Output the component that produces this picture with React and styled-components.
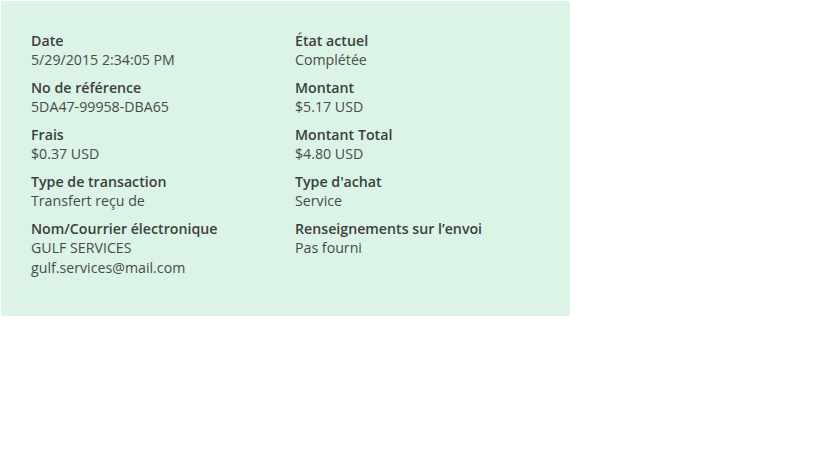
import React from 'react'
import styled, { createGlobalStyle } from 'styled-components'

const GlobalStyle = createGlobalStyle`
  body {
    margin: 0;
    background: #ffffff;
    font-family: "Open Sans", "Noto Sans", sans-serif;
  }
`

const Panel = styled.div`
  margin: 1px 0 0 1px;
  width: 569px;
  box-sizing: border-box;
  padding: 30px 0 38px 30px;
  background: #dbf4e6;
  border-radius: 2px;
  display: grid;
  grid-template-columns: 264px 1fr;
  row-gap: 8px;
`

const Field = styled.div`
  display: flex;
  flex-direction: column;
`

const Label = styled.div`
  font-size: 14.2px;
  line-height: 19px;
  font-weight: 600;
  color: #3b403d;
`

const Value = styled.div`
  font-size: 14.2px;
  line-height: 20px;
  color: #474c49;
`

const fields = [
  ['Date', ['5/29/2015 2:34:05 PM']],
  ['État actuel', ['Complétée']],
  ['No de référence', ['5DA47-99958-DBA65']],
  ['Montant', ['$5.17 USD']],
  ['Frais', ['$0.37 USD']],
  ['Montant Total', ['$4.80 USD']],
  ['Type de transaction', ['Transfert reçu de']],
  ["Type d'achat", ['Service']],
  ['Nom/Courrier électronique', ['GULF SERVICES', 'gulf.services@mail.com']],
  ['Renseignements sur l’envoi', ['Pas fourni']],
]

export default function App() {
  return (
    <>
      <GlobalStyle />
      <Panel>
        {fields.map(([label, values]) => (
          <Field key={label}>
            <Label>{label}</Label>
            {values.map((v) => (
              <Value key={v}>{v}</Value>
            ))}
          </Field>
        ))}
      </Panel>
    </>
  )
}
